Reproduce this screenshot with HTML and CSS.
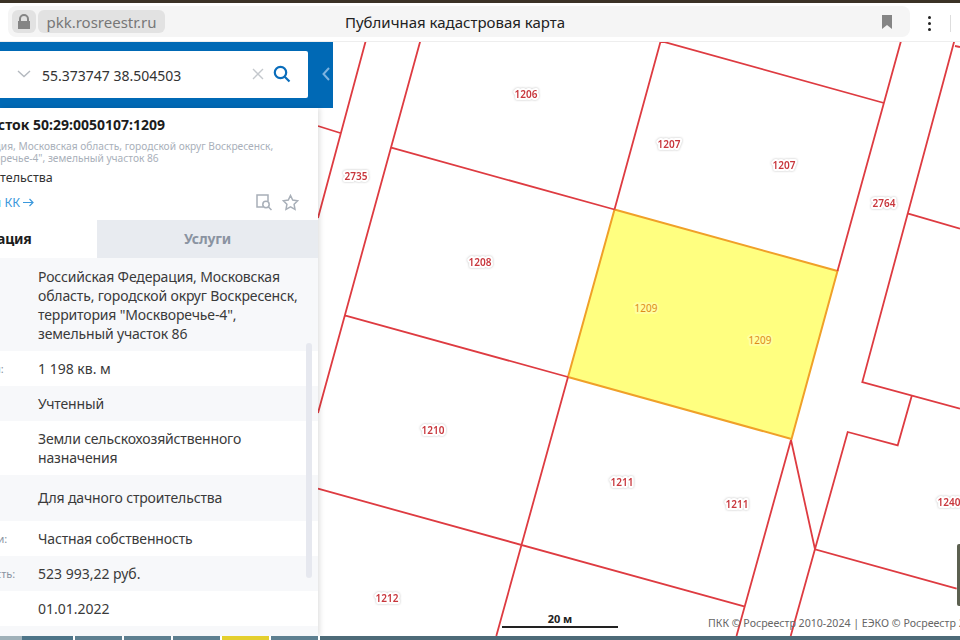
FILE: index.html
```html
<!DOCTYPE html>
<html lang="ru">
<head>
    <meta charset="UTF-8">
    <meta name="viewport" content="width=device-width, initial-scale=1.0">
    <title>Публичная кадастровая карта</title>
    <link rel="stylesheet" href="styles.css">
</head>
<body>
    <div class="top-strip"></div>
    <header class="browser-bar">
        <div class="address-bar">
            <div class="chip chip-lock">
                <svg width="14" height="16" viewBox="0 0 14 16"><path class="icon-grey" d="M2 7V5a5 5 0 0 1 10 0v2h1v8H1V7zm2 0h6V5a3 3 0 0 0-6 0z"/></svg>
            </div>
            <div class="chip chip-url">pkk.rosreestr.ru</div>
            <div class="page-title">Публичная кадастровая карта</div>
            <svg class="bookmark" width="12" height="14" viewBox="0 0 12 14"><path class="icon-grey" d="M1 0h10v14l-5-4-5 4z"/></svg>
        </div>
        <div class="menu-dots"><span></span><span></span><span></span></div>
        <div class="bar-divider"></div>
    </header>

    <main class="workspace">
        <svg class="map" width="960" height="594" viewBox="0 42 960 594">
            <polygon class="parcel-active" points="614.5,209.5 837.5,271 791.5,439 568,377"/>
            <path class="parcel" d="M365.7 41 318 218M318 126l22.3 7M420.3 41 318 413M391.3 147.7l223.2 61.8M344.7 315.3 568 377M660.7 41 614.5 209.5M660.7 41 884 103M901 41 837.5 271M791 440l-54.5 196M954.3 41 862.3 382 960 408.7M955 46l5 1M908.3 213.7 960 228.7M911.7 396l-14 49.3-50-13.3L790.7 636M791 440l24 109.3 141.7 39.4M318 488.7 745 606.7M568 377 496.3 636"/>
            <g class="labels">
                <text x="526" y="98">1206</text>
                <text x="356" y="180">2735</text>
                <text x="480" y="266">1208</text>
                <text x="669" y="148">1207</text>
                <text x="784" y="169">1207</text>
                <text x="884" y="207">2764</text>
                <text x="433" y="434">1210</text>
                <text x="622" y="486">1211</text>
                <text x="737" y="508">1211</text>
                <text x="387" y="602">1212</text>
                <text x="949" y="506">1240</text>
            </g>
            <g class="labels labels-active">
                <text x="646" y="312">1209</text>
                <text x="760" y="344">1209</text>
            </g>
        </svg>

        <div class="minimap"></div>
        <div class="scale"><span class="scale-text">20 м</span></div>
        <div class="attribution">ПКК © Росреестр 2010-2024 | ЕЭКО © Росреестр 2024</div>

        <section class="side">
            <div class="search-band">
                <div class="search-box">
                    <svg class="search-chevron" width="14" height="8" viewBox="0 0 14 8"><path d="M1 1l6 5.5L13 1"/></svg>
                    <span class="search-text">55.373747 38.504503</span>
                    <svg class="search-clear" width="12" height="12" viewBox="0 0 12 12"><path d="M1 1l10 10M11 1 1 11"/></svg>
                    <svg class="search-go" width="18" height="18" viewBox="0 0 18 18"><circle cx="7.5" cy="7.5" r="5.7"/><path d="M11.7 11.7 16.5 16.5"/></svg>
                </div>
                <svg class="collapse" width="8" height="14" viewBox="0 0 8 14"><path d="M7 1 1.500 7 7 13"/></svg>
            </div>

            <div class="panel">
                <div class="panel-inner">
                    <div class="info">
                        <h1 class="info-title">Земельный участок 50:29:0050107:1209</h1>
                        <p class="info-address">Российская Федерация, Московская область, городской округ Воскресенск,<br>территория "Москворечье-4", земельный участок 86</p>
                        <p class="info-use">Для дачного строительства</p>
                        <div class="info-foot">
                            <a class="info-link">Кадастровый план КК
                                <svg width="11" height="9" viewBox="0 0 11 9"><path d="M0 4.500h10M6.500 1l3.500 3.500L6.500 8"/></svg>
                            </a>
                            <div class="info-icons">
                                <svg width="18" height="18" viewBox="0 0 18 18"><path d="M8 14H2V2h11v6"/><circle cx="11" cy="11.500" r="3.200"/><path d="M13.500 14l3 3"/></svg>
                                <svg width="17" height="17" viewBox="0 0 17 17"><path d="M8.500 1.500l2.200 4.600 5 .7-3.600 3.500.9 5-4.500-2.400-4.500 2.400.9-5L1.300 6.800l5-.7z"/></svg>
                            </div>
                        </div>
                    </div>

                    <div class="tabs">
                        <div class="tab tab-active">Информация</div>
                        <div class="tab">Услуги</div>
                    </div>

                    <div class="row row-shade row-address">
                        <div class="row-label">Адрес:</div>
                        <div class="row-value">Российская Федерация, Московская область, городской округ Воскресенск, территория "Москворечье-4", земельный участок 86</div>
                    </div>
                    <div class="row">
                        <div class="row-label">Площадь уточненная:</div>
                        <div class="row-value row-number">1 198 кв. м</div>
                    </div>
                    <div class="row row-shade">
                        <div class="row-label">Статус</div>
                        <div class="row-value">Учтенный</div>
                    </div>
                    <div class="row">
                        <div class="row-label">Категория</div>
                        <div class="row-value">Земли сельскохозяйственного назначения</div>
                    </div>
                    <div class="row row-shade row-tall">
                        <div class="row-label">Разрешенное</div>
                        <div class="row-value">Для дачного строительства</div>
                    </div>
                    <div class="row">
                        <div class="row-label">Форма собственности:</div>
                        <div class="row-value">Частная собственность</div>
                    </div>
                    <div class="row row-shade">
                        <div class="row-label">Кадастровая стоимость:</div>
                        <div class="row-value row-number">523 993,22 руб.</div>
                    </div>
                    <div class="row">
                        <div class="row-label">Дата</div>
                        <div class="row-value row-number">01.01.2022</div>
                    </div>
                    <div class="row row-shade"></div>
                </div>
                <div class="scroll-thumb"></div>
            </div>
        </section>
    </main>

    <footer class="taskbar">
        <span class="task task-a"></span>
        <span class="task task-b"></span>
        <span class="task task-c"></span>
        <span class="task task-c"></span>
        <span class="task task-c"></span>
        <span class="task task-y"></span>
        <span class="task task-c"></span>
        <span class="task task-rest"></span>
    </footer>
</body>
</html>
```

FILE: styles.css
```css
html, body {
    margin: 0;
    padding: 0;
    height: 100%;
}
body {
    font-family: 'Noto Sans', 'Open Sans', Arial, sans-serif;
    color: #333;
    background-color: #fff;
    display: flex;
    flex-direction: column;
    height: 640px;
    overflow: hidden;
}
.top-strip {
    height: 3px;
    background-color: #3b3226;
    flex: none;
}
.browser-bar {
    height: 39px;
    flex: none;
    display: flex;
    align-items: flex-start;
    box-sizing: border-box;
    padding: 3px 0 0 8px;
    border-bottom: 1px solid #eeeeee;
}
.address-bar {
    width: 902px;
    height: 31px;
    background-color: #f5f5f5;
    border-radius: 8px;
    display: flex;
    align-items: center;
    gap: 2px;
    padding-left: 4px;
    box-sizing: border-box;
    position: relative;
}
.chip {
    height: 23px;
    background-color: #e2e2e2;
    border-radius: 6px;
    display: flex;
    align-items: center;
    justify-content: center;
}
.chip-lock {
    width: 24px;
}
.chip-url {
    width: 127px;
    font-size: 15px;
    color: #777;
}
.icon-grey {
    fill: #858585;
}
.page-title {
    position: absolute;
    left: 0;
    right: 8px;
    text-align: center;
    font-size: 15px;
    color: #222;
}
.bookmark {
    margin-left: auto;
    margin-right: 17px;
}
.menu-dots {
    margin-left: 18px;
    padding-top: 10px;
    display: flex;
    flex-direction: column;
    gap: 3px;
}
.menu-dots span {
    width: 3px;
    height: 3px;
    border-radius: 50%;
    background-color: #222;
}
.bar-divider {
    width: 1px;
    height: 17px;
    margin: 9px 0 0 19px;
    background-color: #dddddd;
}

.workspace {
    flex: 1;
    position: relative;
    overflow: hidden;
}
.map {
    position: absolute;
    left: 0;
    top: 0;
    display: block;
}
.parcel {
    fill: none;
    stroke: #de3b41;
    stroke-width: 1.800;
}
.parcel-active {
    fill: #ffff80;
    stroke: #f0a028;
    stroke-width: 2;
}
.labels text {
    font-family: 'Noto Sans', Arial, sans-serif;
    font-size: 10px;
    font-weight: 600;
    text-anchor: middle;
    fill: #c8363c;
    stroke: #fff;
    stroke-width: 4px;
    stroke-linejoin: round;
    paint-order: stroke;
}
.labels {
    filter: drop-shadow(0 0 1px rgba(0, 0, 0, 0.25));
}
.labels-active {
    filter: none;
}
.labels-active text {
    font-weight: 400;
    fill: #dd8a1a;
    stroke: #ffffa0;
}
.minimap {
    position: absolute;
    right: 0;
    top: 502px;
    width: 3px;
    height: 62px;
    background-color: #5c6050;
    border-radius: 2px 0 0 2px;
}
.scale {
    position: absolute;
    left: 502px;
    top: 570px;
    width: 116px;
    border-bottom: 2px solid #222;
    text-align: center;
}
.scale-text {
    display: block;
    font-size: 11px;
    font-weight: 700;
    line-height: 14px;
    color: #222;
}
.attribution {
    position: absolute;
    left: 708px;
    top: 573px;
    font-size: 10.600px;
    line-height: 16px;
    color: #666;
    white-space: nowrap;
}

.side {
    position: absolute;
    left: 0;
    top: 0;
    bottom: 0;
    width: 333px;
    display: flex;
    flex-direction: column;
}
.search-band {
    height: 66px;
    flex: none;
    background-color: #0069b5;
    display: flex;
    align-items: center;
    padding-bottom: 2px;
    box-sizing: border-box;
}
.search-box {
    width: 308px;
    height: 47px;
    flex: none;
    background-color: #fff;
    border-radius: 0 2px 2px 0;
    display: flex;
    align-items: center;
    padding-left: 17px;
    box-sizing: border-box;
}
.search-chevron {
    fill: none;
    stroke: #b4b9bf;
    stroke-width: 1.400;
}
.search-text {
    margin: 2px 0 0 11px;
    font-size: 14px;
    color: #333;
}
.search-clear {
    margin-left: auto;
    fill: none;
    stroke: #c4c8cd;
    stroke-width: 1.400;
}
.search-go {
    margin: 0 17px 0 9px;
    fill: none;
    stroke: #0a6dbb;
    stroke-width: 2.200;
}
.collapse {
    margin-left: 14px;
    fill: none;
    stroke: #7db3e0;
    stroke-width: 2;
}
.panel {
    flex: 1;
    width: 318px;
    background-color: #fff;
    box-shadow: 2px 0 5px rgba(0, 0, 0, 0.12);
    overflow: hidden;
    position: relative;
}
.panel-inner {
    width: 442px;
    margin-left: -124px;
}
.info {
    height: 112px;
    box-sizing: border-box;
    padding: 8px 19px 0 9px;
}
.info-title {
    margin: 0;
    font-size: 14px;
    line-height: 18px;
    font-weight: 700;
    color: #1c1c1c;
}
.info-address {
    margin: 6px 0 0 13px;
    font-size: 10.200px;
    line-height: 12px;
    color: #a9b0ba;
    white-space: nowrap;
}
.info-use {
    margin: 6px 0 0;
    font-size: 12.500px;
    line-height: 16px;
    color: #333;
}
.info-foot {
    margin-top: 7px;
    display: flex;
    align-items: center;
    justify-content: space-between;
}
.info-link {
    margin-left: 3px;
    font-size: 12.500px;
    color: #3a98dc;
}
.info-link svg {
    fill: none;
    stroke: #3a98dc;
    stroke-width: 1.200;
}
.info-icons {
    display: flex;
    align-items: center;
    gap: 9px;
}
.info-icons svg {
    fill: none;
    stroke: #a8afb8;
    stroke-width: 1.500;
}
.tabs {
    display: flex;
    height: 38px;
}
.tab {
    flex: 0 0 50%;
    display: flex;
    align-items: center;
    justify-content: center;
    box-sizing: border-box;
    padding-bottom: 2px;
    font-size: 14px;
    font-weight: 700;
    letter-spacing: -0.2px;
    color: #8a93a1;
    background-color: #e8ebf0;
}
.tab-active {
    padding-right: 4px;
    color: #1c1c1c;
    background-color: #fff;
}
.row {
    display: flex;
    padding: 8px 0;
    min-height: 19px;
}
.row-shade {
    background-color: #f7f8fa;
}
.row-address {
    padding-top: 9px;
}
.row-tall {
    padding: 13px 0 14px;
}
.row-label {
    width: 162px;
    flex: none;
    box-sizing: border-box;
    padding-left: 10px;
    font-size: 11px;
    line-height: 19px;
    color: #8a93a1;
    white-space: nowrap;
}
.row-value {
    width: 264px;
    flex: none;
    font-size: 14px;
    line-height: 19px;
    letter-spacing: -0.15px;
    color: #3a3a3a;
}
.row-number {
    letter-spacing: 0;
}
.scroll-thumb {
    position: absolute;
    left: 306px;
    top: 235px;
    width: 6px;
    height: 235px;
    border-radius: 3px;
    background-color: #e6e8ef;
}

.taskbar {
    height: 4px;
    flex: none;
    display: flex;
    gap: 2px;
    position: relative;
    z-index: 1;
}
.task {
    display: block;
    width: 47px;
}
.task-a {
    width: 22px;
    background-color: #9fb0b8;
    margin-right: -2px;
}
.task-b {
    width: 51px;
    background-color: #4d7488;
}
.task-c {
    background-color: #5d7f90;
}
.task-y {
    background-color: #e4cf2e;
}
.task-rest {
    flex: 1;
    background-color: #4d6b78;
}
```
